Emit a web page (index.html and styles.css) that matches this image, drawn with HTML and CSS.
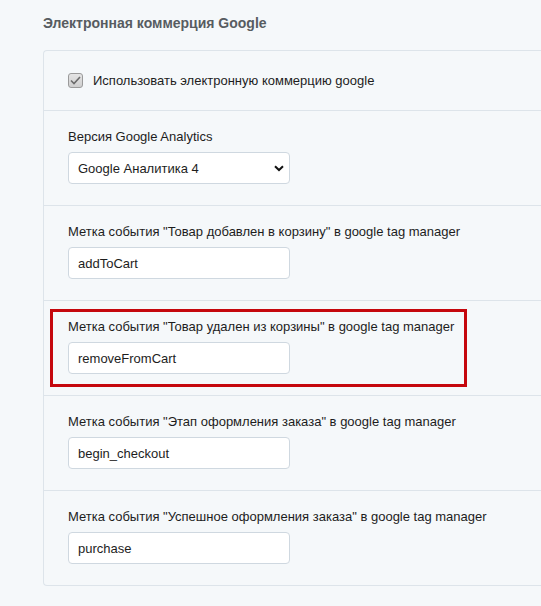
FILE: index.html
```html
<!DOCTYPE html>
<html lang="ru">
<head>
  <meta charset="UTF-8">
  <title>Электронная коммерция Google</title>
  <link rel="stylesheet" href="styles.css">
</head>
<body>
  <h3 class="section-title">Электронная коммерция Google</h3>

  <div class="panel">
    <div class="row row-check">
      <label class="check">
        <span class="check-box">
          <svg width="11" height="9" viewBox="0 0 11 9"><path d="M1 4.5 L4 7.5 L10 1" fill="none" stroke="#6b6b6b" stroke-width="1.6"/></svg>
        </span>
        Использовать электронную коммерцию google
      </label>
    </div>

    <div class="row">
      <div class="field-label">Версия Google Analytics</div>
      <div class="select">
        <span>Google Аналитика 4</span>
        <svg width="10" height="7" viewBox="0 0 10 7"><path d="M1 1.2 L5 5 L9 1.2" fill="none" stroke="#111" stroke-width="2"/></svg>
      </div>
    </div>

    <div class="row">
      <div class="field-label">Метка события "Товар добавлен в корзину" в google tag manager</div>
      <input class="text-input" type="text" value="addToCart">
    </div>

    <div class="row">
      <div class="highlight">
        <div class="field-label">Метка события "Товар удален из корзины" в google tag manager</div>
        <input class="text-input" type="text" value="removeFromCart">
      </div>
    </div>

    <div class="row">
      <div class="field-label">Метка события "Этап оформления заказа" в google tag manager</div>
      <input class="text-input" type="text" value="begin_checkout">
    </div>

    <div class="row">
      <div class="field-label">Метка события "Успешное оформления заказа" в google tag manager</div>
      <input class="text-input" type="text" value="purchase">
    </div>
  </div>
</body>
</html>
```

FILE: styles.css
```css
body {
  margin: 0;
  padding: 0 0 0 43px;
  background-color: #f5f8fa;
  font-family: "Liberation Sans", Arial, sans-serif;
  font-size: 13px;
  color: #1d1d1d;
  overflow: hidden;
}
.section-title {
  margin: 0;
  padding-top: 15px;
  height: 35px;
  font-size: 14px;
  font-weight: bold;
  color: #575c61;
  line-height: 17px;
}
.panel {
  width: 520px;
  border: 1px solid #dde4ea;
  border-right: none;
  border-radius: 4px 0 0 4px;
}
.row {
  height: 95px;
  box-sizing: border-box;
  padding: 16px 24px 0;
  border-top: 1px solid #dde4ea;
}
.row:first-child {
  border-top: none;
  height: 59px;
  padding-top: 0;
  display: flex;
  align-items: center;
}
.check {
  display: flex;
  align-items: center;
  gap: 10px;
  font-size: 13px;
}
.check-box {
  width: 13px;
  height: 13px;
  border: 1px solid #9a9a9a;
  border-radius: 3px;
  background: linear-gradient(#e4e4e4, #cfcfcf);
  display: flex;
  align-items: center;
  justify-content: center;
}
.field-label {
  line-height: 20px;
  margin-bottom: 5px;
}
.select,
.text-input {
  box-sizing: border-box;
  width: 222px;
  height: 32px;
  border: 1px solid #cfd8e0;
  border-radius: 4px;
  background-color: #fff;
  font-family: inherit;
  font-size: 13px;
  color: #1d1d1d;
}
.select {
  display: flex;
  align-items: center;
  justify-content: space-between;
  padding: 0 5px 0 9px;
}
.text-input {
  display: block;
  padding: 0 9px;
  outline: none;
}
.highlight {
  margin: -8px 0 0 -18px;
  width: 396px;
  padding: 5px 0 10px 15px;
  border: 3px solid #c5070d;
}
```
